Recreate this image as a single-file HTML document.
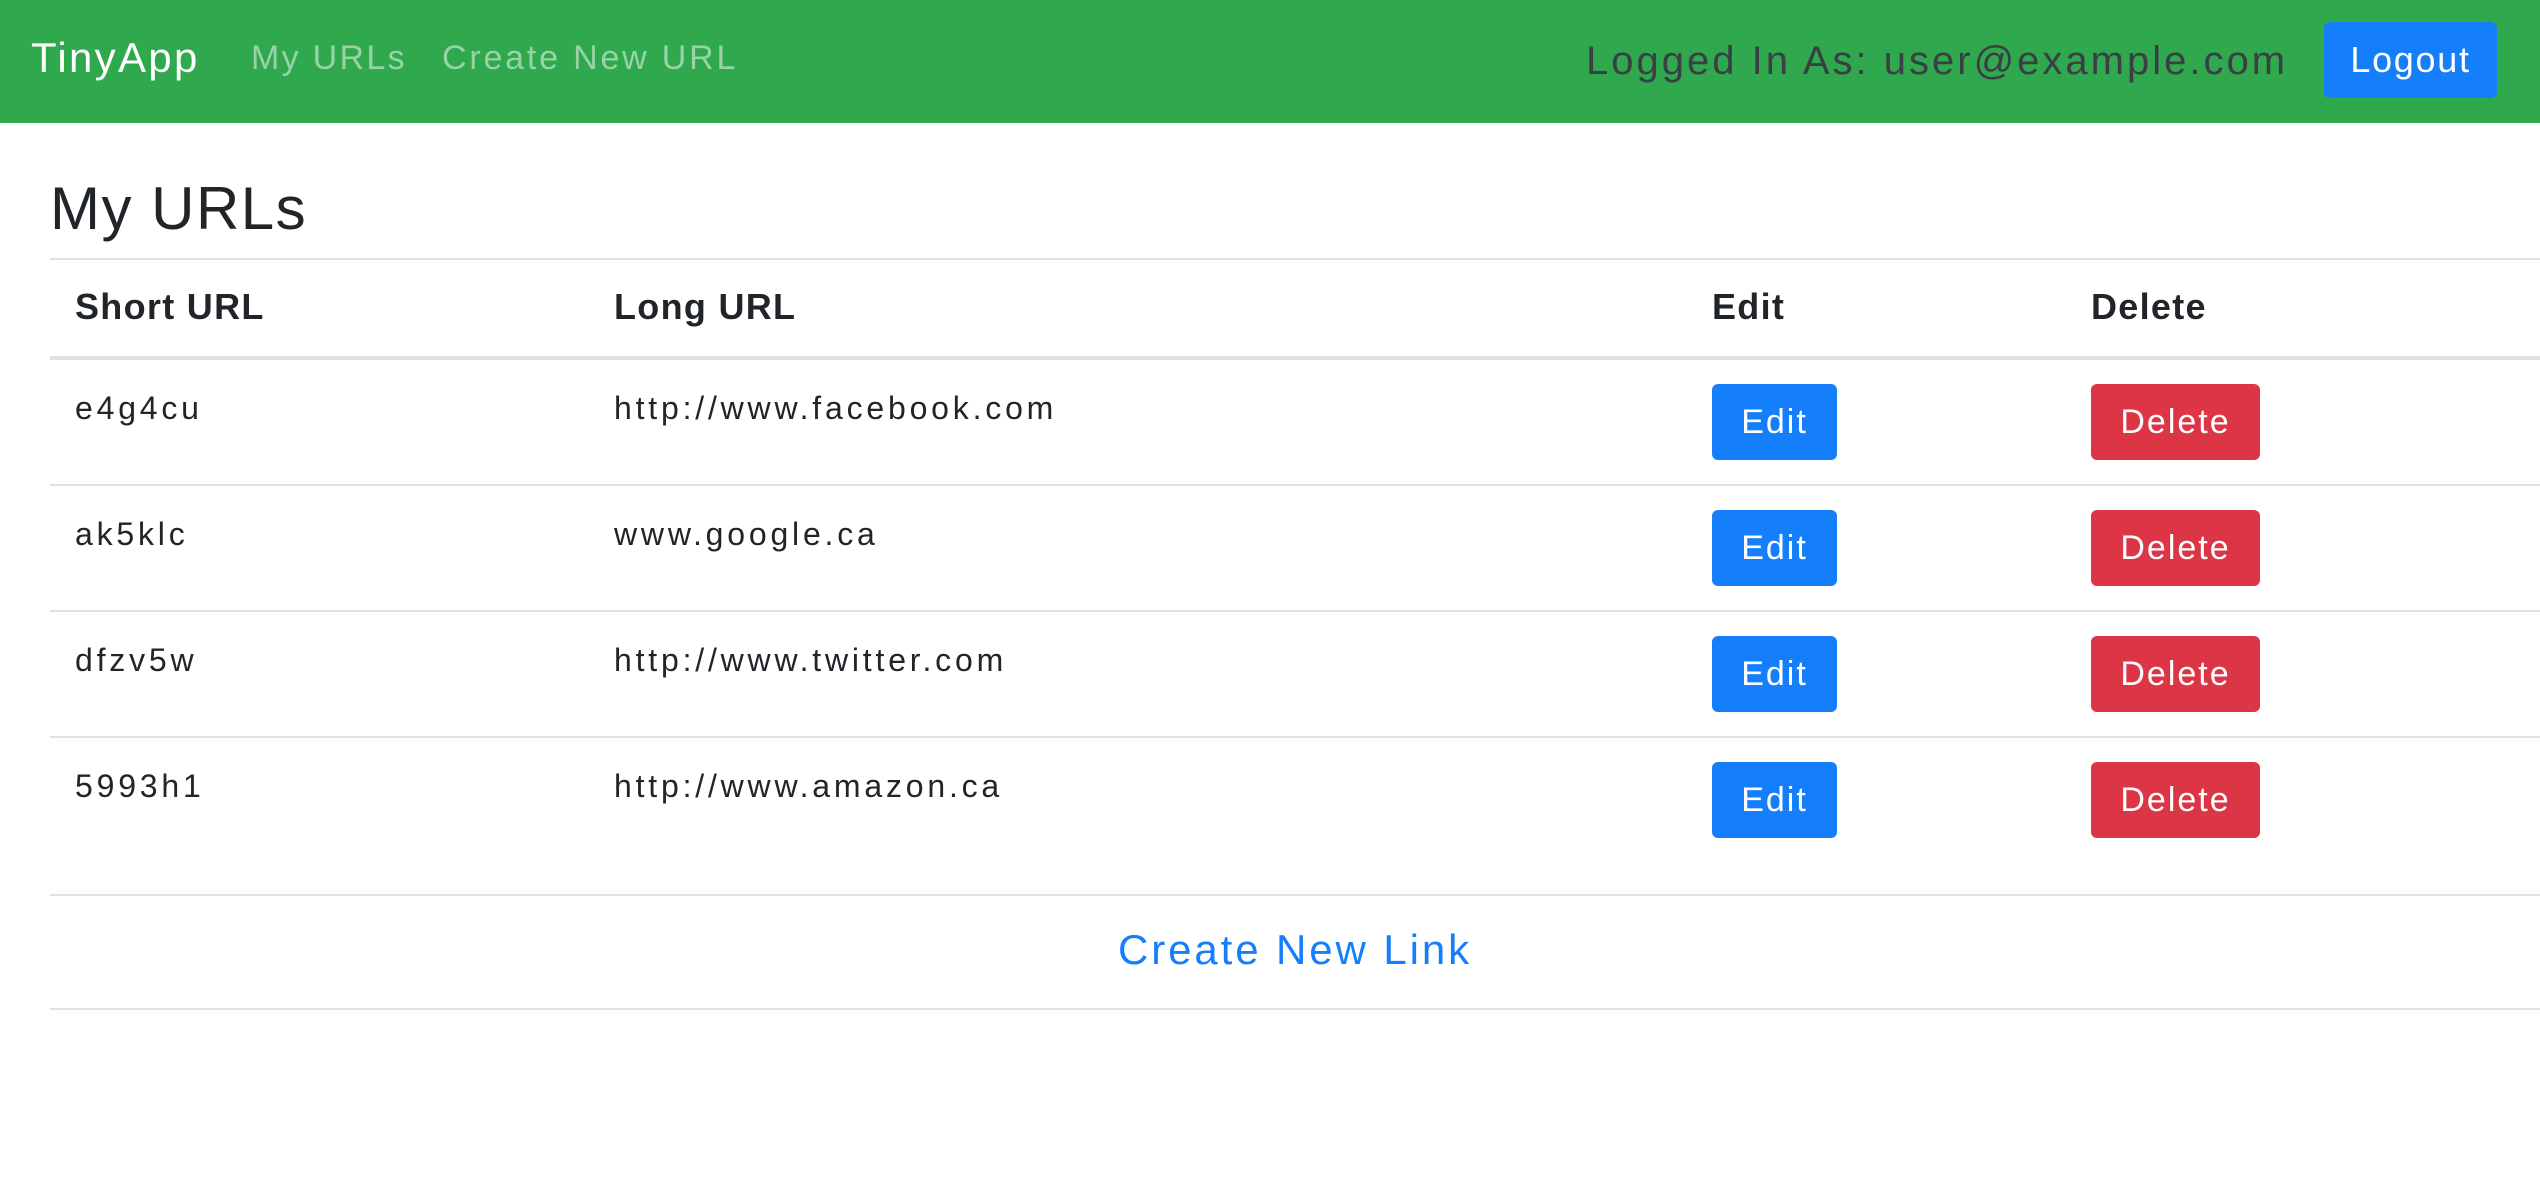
<!DOCTYPE html>
<html><head><meta charset="utf-8"><style>
*{margin:0;padding:0;box-sizing:border-box}
html,body{width:2540px;height:1204px;background:#fff;overflow:hidden;font-family:"Liberation Sans",Arial,sans-serif;color:#212529}
.a{position:absolute;white-space:nowrap;line-height:1}
.nav{position:absolute;left:0;top:0;width:2540px;height:123px;background:#30a84e}
.ln{position:absolute;left:50px;width:2490px;height:2px;background:#dee2e6}
.btn{position:absolute;border-radius:6px;color:#fff;font-size:34px;letter-spacing:2px;display:flex;align-items:center;justify-content:center;line-height:1}
.e{background:#157ffb;width:125px;height:76px;left:1712px}
.d{background:#dc3545;width:169px;height:76px;left:2091px}
.th{font-weight:bold;font-size:36px;letter-spacing:1.3px;top:289px}
.td{font-size:32px;letter-spacing:3.8px}
</style></head><body>
<div class="nav"></div>
<div class="a" style="left:31px;top:37px;font-size:42px;letter-spacing:2.3px;color:#fff">TinyApp</div>
<div class="a" style="left:251px;top:41px;font-size:34px;letter-spacing:2.3px;color:#97d3a6">My URLs</div>
<div class="a" style="left:442px;top:41px;font-size:34px;letter-spacing:2.8px;color:#97d3a6">Create New URL</div>
<div class="a" style="left:1586px;top:41px;font-size:40px;letter-spacing:3px;color:#3a3f44">Logged In As: user@example.com</div>
<div class="btn" style="left:2324px;top:22px;width:173px;height:76px;background:#157ffb;font-size:36px;letter-spacing:1.7px">Logout</div>

<div class="a" style="left:50px;top:179px;font-size:60px;letter-spacing:1.5px">My URLs</div>
<div class="ln" style="top:258px"></div>
<div class="a th" style="left:75px">Short URL</div>
<div class="a th" style="left:614px">Long URL</div>
<div class="a th" style="left:1712px">Edit</div>
<div class="a th" style="left:2091px">Delete</div>
<div class="ln" style="top:356px;height:4px"></div>

<div class="a td" style="left:75px;top:392px">e4g4cu</div>
<div class="a td" style="left:614px;top:392px">http://www.facebook.com</div>
<div class="btn e" style="top:384px">Edit</div><div class="btn d" style="top:384px">Delete</div>
<div class="ln" style="top:484px"></div>

<div class="a td" style="left:75px;top:518px">ak5klc</div>
<div class="a td" style="left:614px;top:518px">www.google.ca</div>
<div class="btn e" style="top:510px">Edit</div><div class="btn d" style="top:510px">Delete</div>
<div class="ln" style="top:610px"></div>

<div class="a td" style="left:75px;top:644px">dfzv5w</div>
<div class="a td" style="left:614px;top:644px">http://www.twitter.com</div>
<div class="btn e" style="top:636px">Edit</div><div class="btn d" style="top:636px">Delete</div>
<div class="ln" style="top:736px"></div>

<div class="a td" style="left:75px;top:770px">5993h1</div>
<div class="a td" style="left:614px;top:770px">http://www.amazon.ca</div>
<div class="btn e" style="top:762px">Edit</div><div class="btn d" style="top:762px">Delete</div>

<div class="ln" style="top:894px"></div>
<div class="a" style="left:50px;width:2490px;text-align:center;top:929px;font-size:42px;letter-spacing:2.9px;color:#157ffb">Create New Link</div>
<div class="ln" style="top:1008px"></div>
</body></html>
